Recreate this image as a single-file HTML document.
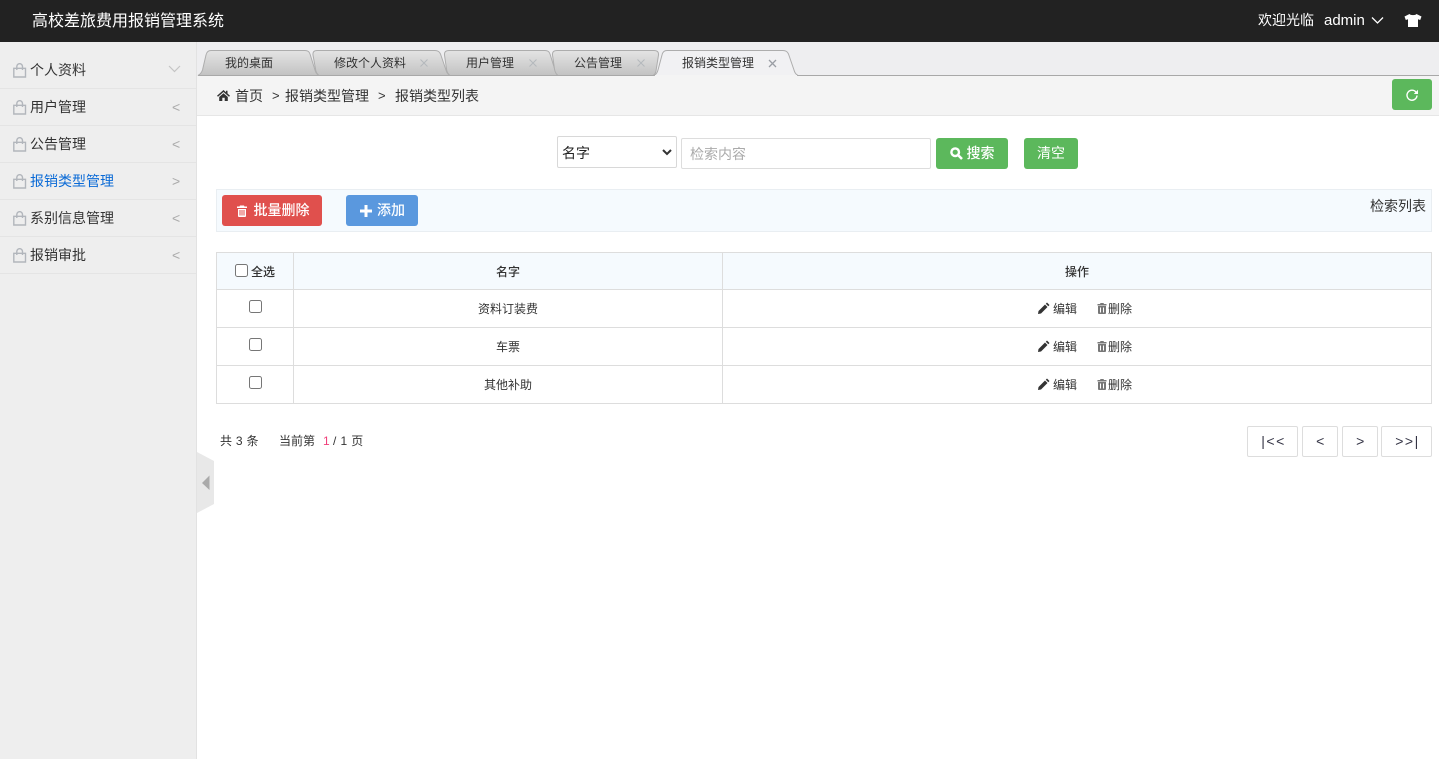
<!DOCTYPE html>
<html lang="zh-CN">
<head>
<meta charset="utf-8">
<title>高校差旅费用报销管理系统</title>
<style>
*{box-sizing:border-box}
html,body{margin:0;padding:0;width:1439px;height:759px;overflow:hidden;background:#fff;font-family:"Liberation Sans","Noto Sans CJK SC",sans-serif;color:#333;font-size:12px}
.a{position:absolute;white-space:nowrap}
.hdr{left:0;top:0;width:1439px;height:42px;background:#222}
.side{left:0;top:42px;width:197px;height:717px;background:#eeeeee;border-right:1px solid #e2e2e2}
.mi{position:absolute;left:0;width:196px;height:37px;border-bottom:1px solid #e4e4e4}
.mi svg{position:absolute;left:13px;top:11px}
.mi span{position:absolute;left:30px;top:8px;font-size:14px;line-height:20px;color:#333}
.mi i{position:absolute;left:172px;top:8px;font-style:normal;font-size:14px;line-height:20px;color:#aaa}
.tabbar{left:197px;top:42px;width:1242px;height:34px;background:#eeeef0}
.crumb{left:197px;top:76px;width:1242px;height:40px;background:#f4f4f4;border-bottom:1px solid #e6e6e6}
.t{font-size:12px;line-height:16px;color:#333}
.btn{position:absolute;border-radius:3px;color:#fff;font-size:14px;line-height:31px;text-align:center}
.pg{position:absolute;top:426px;height:31px;border:1px solid #ddd;border-radius:2px;text-align:center;line-height:29px;font-size:14px;color:#334;letter-spacing:1.500px;padding-left:2px}
.line{position:absolute;background:#ddd}
.cb{position:absolute;width:13px;height:13px;border:1px solid #767676;border-radius:2.5px;background:#fff}
.c{position:absolute;text-align:center;font-size:12px;line-height:16px;color:#333}
.b{font-weight:500}
</style>
</head>
<body>
<div class="a hdr"></div>
<div class="a" style="left:32px;top:10px;font-size:16px;line-height:24px;color:#fff">高校差旅费用报销管理系统</div>
<div class="a" style="left:1258px;top:10px;font-size:14px;line-height:20px;color:#fff">欢迎光临</div>
<div class="a" style="left:1324px;top:11px;font-size:15px;line-height:20px;color:#fff">admin</div>
<svg class="a" style="left:1371px;top:16px" width="13" height="9" viewBox="0 0 13 9"><path d="M1 1.500L6.500 7L12 1.500" fill="none" stroke="#fff" stroke-width="1.300"/></svg>
<svg class="a" style="left:1404px;top:14px" width="18" height="13" viewBox="0 0 18 13"><path d="M5.500 0L0.500 2.500L1.800 6L4 5.200V13H14V5.200L16.200 6L17.500 2.500L12.500 0C11.500 1.500 6.500 1.500 5.500 0Z" fill="#fff"/></svg>

<div class="a side">
<div class="mi" style="top:10px"><svg width="14" height="15" viewBox="0 0 14 15"><path d="M.8 5.300H12.500V14H.8ZM3.800 7V3.500A2.800 2.800 0 0 1 9.500 3.500V7" fill="none" stroke="#b2b6bc" stroke-width="1.400"/></svg><span>个人资料</span><svg style="left:168px;top:13px" width="13" height="8" viewBox="0 0 13 8"><path d="M1 1L6.500 6.500L12 1" fill="none" stroke="#c4c4c4" stroke-width="1.200"/></svg></div>
<div class="mi" style="top:47px"><svg width="14" height="15" viewBox="0 0 14 15"><path d="M.8 5.300H12.500V14H.8ZM3.800 7V3.500A2.800 2.800 0 0 1 9.500 3.500V7" fill="none" stroke="#b2b6bc" stroke-width="1.400"/></svg><span>用户管理</span><i>&lt;</i></div>
<div class="mi" style="top:84px"><svg width="14" height="15" viewBox="0 0 14 15"><path d="M.8 5.300H12.500V14H.8ZM3.800 7V3.500A2.800 2.800 0 0 1 9.500 3.500V7" fill="none" stroke="#b2b6bc" stroke-width="1.400"/></svg><span>公告管理</span><i>&lt;</i></div>
<div class="mi" style="top:121px"><svg width="14" height="15" viewBox="0 0 14 15"><path d="M.8 5.300H12.500V14H.8ZM3.800 7V3.500A2.800 2.800 0 0 1 9.500 3.500V7" fill="none" stroke="#b2b6bc" stroke-width="1.400"/></svg><span style="color:#0a6ad6">报销类型管理</span><i>&gt;</i></div>
<div class="mi" style="top:158px"><svg width="14" height="15" viewBox="0 0 14 15"><path d="M.8 5.300H12.500V14H.8ZM3.800 7V3.500A2.800 2.800 0 0 1 9.500 3.500V7" fill="none" stroke="#b2b6bc" stroke-width="1.400"/></svg><span>系别信息管理</span><i>&lt;</i></div>
<div class="mi" style="top:195px"><svg width="14" height="15" viewBox="0 0 14 15"><path d="M.8 5.300H12.500V14H.8ZM3.800 7V3.500A2.800 2.800 0 0 1 9.500 3.500V7" fill="none" stroke="#b2b6bc" stroke-width="1.400"/></svg><span>报销审批</span><i>&lt;</i></div>
</div>

<div class="a tabbar"></div>
<svg class="a" style="left:197px;top:42px" width="1242" height="34" viewBox="197 42 1242 34">
<defs><linearGradient id="g" x1="0" y1="0" x2="0" y2="1"><stop offset="0" stop-color="#e4e4e4"/><stop offset="1" stop-color="#c2c2c2"/></linearGradient></defs>
<path d="M198 75.500Q201 74 202.500 70L206 55Q207 50.500 211 50.500H305Q309 50.500 310 54L315 70Q316 74 319 75.500Z" fill="url(#g)" stroke="#adadad"/>
<path d="M319 75.500Q316 73 315.500 69L313 55Q312.500 50.500 317 50.500H435Q439 50.500 440.500 54L446 70Q447 74 450 75.500Z" fill="url(#g)" stroke="#adadad"/>
<path d="M450 75.500Q447 73 446.500 69L444.500 55Q444 50.500 449 50.500H545Q549 50.500 550 54L555 70Q556 74 558 75.500Z" fill="url(#g)" stroke="#adadad"/>
<path d="M558 75.500Q555 73 554.500 69L552.500 55Q552 50.500 557 50.500H654Q659 50.500 658.500 55L656 71Q655.500 74 653 75.500Z" fill="url(#g)" stroke="#adadad"/>
<path d="M198 75.500H1439" stroke="#a8a8a8" fill="none"/>
<path d="M654 75.500Q657 74 658 70L662 55Q663 50.500 667 50.500H783Q787 50.500 788.500 54L794 70Q795 74 798 75.500" fill="#f1f1f3" stroke="#adadad"/>
<path d="M655 75.500H797" stroke="#f4f4f4"/>
</svg>
<div class="a t" style="left:225px;top:55px">我的桌面</div>
<div class="a t" style="left:334px;top:55px">修改个人资料</div>
<div class="a t" style="left:466px;top:55px">用户管理</div>
<div class="a t" style="left:574px;top:55px">公告管理</div>
<div class="a t" style="left:682px;top:55px">报销类型管理</div>
<svg class="a" style="left:420px;top:59px" width="8" height="8" viewBox="0 0 8 8"><path d="M.5 .5L7.500 7.500M7.500 .5L.5 7.500" stroke="#b4b8bc"/></svg>
<svg class="a" style="left:529px;top:59px" width="8" height="8" viewBox="0 0 8 8"><path d="M.5 .5L7.500 7.500M7.500 .5L.5 7.500" stroke="#b4b8bc"/></svg>
<svg class="a" style="left:637px;top:59px" width="8" height="8" viewBox="0 0 8 8"><path d="M.5 .5L7.500 7.500M7.500 .5L.5 7.500" stroke="#b4b8bc"/></svg>
<svg class="a" style="left:768px;top:59px" width="9" height="9" viewBox="0 0 9 9"><path d="M1 1L8 8M8 1L1 8" stroke="#9a9ea4" stroke-width="1.300"/></svg>

<div class="a crumb"></div>
<svg class="a" style="left:217px;top:90px" width="13" height="11" viewBox="0 0 13 11"><path d="M6.500 0L0 5.800L1 6.800L6.500 2L12 6.800L13 5.800L10.500 3.500V.8H9V2.200ZM2.200 7V11H5.300V7.800H7.700V11H10.800V7L6.500 3.200Z" fill="#333"/></svg>
<div class="a" style="left:235px;top:86px;font-size:14px;line-height:20px;color:#333">首页</div>
<div class="a" style="left:272px;top:86px;font-size:13px;line-height:20px;color:#333">&gt;</div>
<div class="a" style="left:285px;top:86px;font-size:14px;line-height:20px;color:#333">报销类型管理</div>
<div class="a" style="left:378px;top:86px;font-size:13px;line-height:20px;color:#333">&gt;</div>
<div class="a" style="left:395px;top:86px;font-size:14px;line-height:20px;color:#333">报销类型列表</div>
<div class="btn" style="left:1392px;top:79px;width:40px;height:31px;background:#5cb85c"></div>
<svg class="a" style="left:1405px;top:88px" width="14" height="14" viewBox="0 0 14 14"><path d="M11 4.200A5 5 0 1 0 12 7.500" fill="none" stroke="#fff" stroke-width="1.400"/><path d="M13 1.800V6H8.800Z" fill="#fff"/></svg>

<div class="a" style="left:557px;top:136px;width:120px;height:32px;background:#fff;border:1px solid #d8d8d8;border-radius:2px"></div>
<div class="a" style="left:562px;top:143px;font-size:14px;line-height:20px;color:#222">名字</div>
<svg class="a" style="left:662px;top:149px" width="10" height="7" viewBox="0 0 10 7"><path d="M1 1L5 5L9 1" fill="none" stroke="#333" stroke-width="2"/></svg>
<div class="a" style="left:681px;top:138px;width:250px;height:31px;background:#fff;border:1px solid #ddd;border-radius:2px"></div>
<div class="a" style="left:690px;top:144px;font-size:14px;line-height:20px;color:#aaa">检索内容</div>
<div class="btn b" style="left:936px;top:138px;width:72px;height:31px;background:#5cb85c;padding-left:17px">搜索</div>
<svg class="a" style="left:950px;top:147px" width="13" height="13" viewBox="0 0 13 13"><circle cx="5.200" cy="5.200" r="3.800" fill="none" stroke="#fff" stroke-width="2.400"/><path d="M8 8L12 12" stroke="#fff" stroke-width="2.600"/></svg>
<div class="btn" style="left:1024px;top:138px;width:54px;height:31px;background:#5cb85c">清空</div>

<div class="a" style="left:216px;top:189px;width:1216px;height:43px;background:#f5fafe;border:1px solid #e9eef2"></div>
<div class="btn b" style="left:222px;top:195px;width:100px;height:31px;background:#e0504d;padding-left:19px;font-size:14px">批量删除</div>
<svg class="a" style="left:236px;top:205px" width="12" height="12" viewBox="0 0 12 12"><path d="M4 .5H8L8.500 1.500H11V3H1V1.500H3.500ZM2 4H10V11Q10 12 9 12H3Q2 12 2 11ZM3.500 5V10.500H4.500V5ZM5.500 5V10.500H6.500V5ZM7.500 5V10.500H8.500V5Z" fill="#fff" fill-rule="evenodd"/></svg>
<div class="btn b" style="left:346px;top:195px;width:72px;height:31px;background:#5a98de;padding-left:18px;font-size:14px">添加</div>
<svg class="a" style="left:360px;top:205px" width="12" height="12" viewBox="0 0 12 12"><path d="M4.500 0H7.500V4.500H12V7.500H7.500V12H4.500V7.500H0V4.500H4.500Z" fill="#fff"/></svg>
<div class="a" style="right:13px;top:196px;font-size:14px;line-height:20px;color:#333">检索列表</div>

<div class="a" style="left:216px;top:252px;width:1216px;height:38px;background:#f5fafe"></div>
<div class="line" style="left:216px;top:252px;width:1216px;height:1px"></div>
<div class="line" style="left:216px;top:289px;width:1216px;height:1px"></div>
<div class="line" style="left:216px;top:327px;width:1216px;height:1px"></div>
<div class="line" style="left:216px;top:365px;width:1216px;height:1px"></div>
<div class="line" style="left:216px;top:403px;width:1216px;height:1px"></div>
<div class="line" style="left:216px;top:252px;width:1px;height:152px"></div>
<div class="line" style="left:293px;top:252px;width:1px;height:152px"></div>
<div class="line" style="left:722px;top:252px;width:1px;height:152px"></div>
<div class="line" style="left:1431px;top:252px;width:1px;height:152px"></div>

<div class="cb" style="left:235px;top:264px"></div>
<div class="c b" style="left:251px;top:264px">全选</div>
<div class="c b" style="left:294px;top:264px;width:428px">名字</div>
<div class="c b" style="left:723px;top:264px;width:708px">操作</div>

<div class="cb" style="left:249px;top:300px"></div>
<div class="cb" style="left:249px;top:338px"></div>
<div class="cb" style="left:249px;top:376px"></div>
<div class="c" style="left:294px;top:301px;width:428px">资料订装费</div>
<div class="c" style="left:294px;top:339px;width:428px">车票</div>
<div class="c" style="left:294px;top:377px;width:428px">其他补助</div>

<svg class="a" style="left:1038px;top:302px" width="12" height="12" viewBox="0 0 12 12"><path d="M9 0.500L11.500 3L10.300 4.200L7.800 1.700ZM7 2.500L9.500 5L3 11.500L0 12L.5 9Z" fill="#333"/></svg>
<div class="c" style="left:1053px;top:301px">编辑</div>
<svg class="a" style="left:1097px;top:303px" width="10" height="11" viewBox="0 0 10 11"><path d="M3.500 0H6.500L7 1H9.500V2.500H.5V1H3ZM1 3H9V10Q9 11 8 11H2Q1 11 1 10ZM3 4.500V9.500H4V4.500ZM6 4.500V9.500H7V4.500Z" fill="#777" fill-rule="evenodd"/></svg>
<div class="c" style="left:1108px;top:301px">删除</div>

<svg class="a" style="left:1038px;top:340px" width="12" height="12" viewBox="0 0 12 12"><path d="M9 0.500L11.500 3L10.300 4.200L7.800 1.700ZM7 2.500L9.500 5L3 11.500L0 12L.5 9Z" fill="#333"/></svg>
<div class="c" style="left:1053px;top:339px">编辑</div>
<svg class="a" style="left:1097px;top:341px" width="10" height="11" viewBox="0 0 10 11"><path d="M3.500 0H6.500L7 1H9.500V2.500H.5V1H3ZM1 3H9V10Q9 11 8 11H2Q1 11 1 10ZM3 4.500V9.500H4V4.500ZM6 4.500V9.500H7V4.500Z" fill="#777" fill-rule="evenodd"/></svg>
<div class="c" style="left:1108px;top:339px">删除</div>

<svg class="a" style="left:1038px;top:378px" width="12" height="12" viewBox="0 0 12 12"><path d="M9 0.500L11.500 3L10.300 4.200L7.800 1.700ZM7 2.500L9.500 5L3 11.500L0 12L.5 9Z" fill="#333"/></svg>
<div class="c" style="left:1053px;top:377px">编辑</div>
<svg class="a" style="left:1097px;top:379px" width="10" height="11" viewBox="0 0 10 11"><path d="M3.500 0H6.500L7 1H9.500V2.500H.5V1H3ZM1 3H9V10Q9 11 8 11H2Q1 11 1 10ZM3 4.500V9.500H4V4.500ZM6 4.500V9.500H7V4.500Z" fill="#777" fill-rule="evenodd"/></svg>
<div class="c" style="left:1108px;top:377px">删除</div>

<div class="a" style="left:220px;top:433px;font-size:12px;line-height:16px;color:#333;word-spacing:.6px">共 3 条</div>
<div class="a" style="left:279px;top:433px;font-size:12px;line-height:16px;color:#333">当前第</div>
<div class="a" style="left:323px;top:433px;font-size:12px;line-height:16px;color:#f0407a">1</div>
<div class="a" style="left:333px;top:433px;font-size:12px;line-height:16px;color:#333;word-spacing:.8px">/ 1 页</div>

<div class="pg" style="left:1247px;width:51px">|&lt;&lt;</div>
<div class="pg" style="left:1302px;width:36px">&lt;</div>
<div class="pg" style="left:1342px;width:36px">&gt;</div>
<div class="pg" style="left:1381px;width:51px">&gt;&gt;|</div>

<svg class="a" style="left:197px;top:452px" width="17" height="61" viewBox="0 0 17 61"><path d="M0 0L17 9V52L0 61Z" fill="#e8e8e8"/><path d="M12.500 23.500V38L5 31Z" fill="#aaa"/></svg>
</body>
</html>
